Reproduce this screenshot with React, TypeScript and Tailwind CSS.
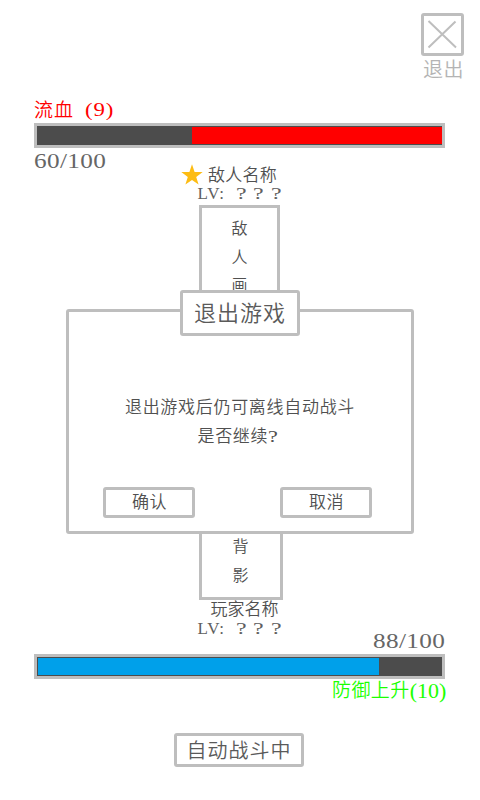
import type { ReactNode } from "react";

const cjk = "font-['Liberation_Serif','Noto_Sans_CJK_SC',sans-serif] font-[350]";
const latin = "font-['Liberation_Serif',serif]";

function Level() {
  return (
    <div className={`${latin} flex h-[17px] items-center text-[17px] leading-[17px] text-[#606060]`}>
      <span className="w-[38px] tracking-[1px]">LV:</span>
      <span className="w-[17.5px] origin-left scale-x-[1.4]">?</span>
      <span className="w-[17.5px] origin-left scale-x-[1.4]">?</span>
      <span className="w-[12px] origin-left scale-x-[1.4]">?</span>
    </div>
  );
}

function Wide({ children, className = "" }: { children: ReactNode; className?: string }) {
  return <span className={`${latin} inline-block ${className}`}>{children}</span>;
}

function DialogButton({ label }: { label: string }) {
  return (
    <button className="flex h-[31px] w-[92px] items-center justify-center rounded-[3px] border-[3px] border-[#bebebe] bg-white pt-px pl-px text-[17px] leading-[20px] tracking-[0.6px]">
      {label}
    </button>
  );
}

function ExitDialog() {
  return (
    <div
      role="dialog"
      className="absolute top-[290px] left-[66px] flex h-[244px] w-[348px] flex-col items-center pt-[19px]"
    >
      <div className="flex w-full flex-1 flex-col items-center rounded-[3px] border-[3px] border-[#bebebe] bg-white">
        <h2 className="mt-[-22px] flex h-[46px] w-[120px] shrink-0 items-center justify-center rounded-[3px] border-[3px] border-[#bebebe] bg-white pt-[2px] text-[22px] leading-[26px] font-[350] tracking-[1px] text-[#5a5a5a]">
          退出游戏
        </h2>
        <p className="mt-[57px] text-center text-[17px] leading-[29px] tracking-[0.7px]">
          退出游戏后仍可离线自动战斗
          <br />
          <span className="mr-[6px]">
            是否继续<span className="inline-block origin-left scale-x-[1.3]">?</span>
          </span>
        </p>
        <div className="mt-[36px] flex w-full justify-between pr-[39px] pl-[34px]">
          <DialogButton label="确认" />
          <DialogButton label="取消" />
        </div>
      </div>
    </div>
  );
}

export default function App() {
  return (
    <main className={`${cjk} relative h-[800px] w-[480px] overflow-hidden bg-white whitespace-nowrap text-[#505050]`}>
      <div className="flex h-full flex-col">
        <header className="flex h-[84px] shrink-0 justify-end pt-[13px] pr-[16px]">
          <button className="flex w-[43px] flex-col items-center text-[#b4b4b4]">
            <span className="flex h-[43px] w-[43px] shrink-0 items-center justify-center rounded-[3px] border-[3px] border-[#bebebe]">
              <svg width="37" height="37" viewBox="0 0 37 37" stroke="#bebebe" strokeWidth="2" fill="none">
                <path d="M4.5 5L32 31.5M31.5 5.5L4.5 31.5" />
              </svg>
            </span>
            <span className="ml-[2px] flex h-[28px] items-center text-[20px] leading-[26px] tracking-[0.5px]">退出</span>
          </button>
        </header>

        <section className="flex h-[81px] shrink-0 flex-col pt-[12px] pr-[35px] pl-[34px]">
          <div className="flex h-[27px] shrink-0 items-center text-[19px] leading-[26px] text-[#ff0000]">
            <span className="mt-[2px] tracking-[1px]">流血</span>
            <Wide className="ml-[11px] origin-left scale-x-[1.2] text-[19px] tracking-[0.7px]">(9)</Wide>
          </div>
          <div className="flex h-[25px] shrink-0 justify-end border-[3px] border-[#bebebe] bg-[#4c4c4c] py-px">
            <div className="w-[250px] bg-[#ff0000]" />
          </div>
          <div className="flex h-[17px] shrink-0 items-start pt-[4px] text-[#666]">
            <Wide className="origin-left scale-x-[1.2] text-[21px] leading-[18px] tracking-[0.3px]">60/100</Wide>
          </div>
        </section>

        <section className="flex shrink-0 flex-col items-center">
          <div className="flex h-[20px] items-center pr-[22px]">
            <svg className="mr-[5px] h-[22px] w-[22px]" viewBox="0 0 22 22" fill="#fdbc13">
              <path d="M11 0.3L13.6 8.1H21.7L15.2 12.9L17.6 20.5L11 16L4.4 20.5L6.8 12.9L0.3 8.1H8.4Z" />
            </svg>
            <span className="mt-[2px] text-[17px] leading-[20px] tracking-[0.3px]">敌人名称</span>
          </div>
          <Level />
          <div className="mt-[3px] mr-px flex h-[120px] w-[81px] flex-col items-center border-[3px] border-[#bebebe] pt-[7px] text-[16px] leading-[28.5px]">
            <span>敌</span>
            <span>人</span>
            <span>画</span>
          </div>
        </section>

        <div className="min-h-0 flex-1" />

        <section className="flex shrink-0 flex-col items-center">
          <div className="ml-[2px] flex h-[100px] w-[84px] flex-col items-center justify-end border-[3px] border-[#bebebe] pr-px pb-[7px] text-[16px] leading-[28.5px]">
            <span>背</span>
            <span>影</span>
          </div>
          <div className="mt-px mb-px ml-[9px] text-[17px] leading-[18px]">玩家名称</div>
          <Level />
        </section>

        <section className="flex h-[71px] shrink-0 flex-col items-end pr-[35px] pl-[34px]">
          <div className="flex h-[17px] shrink-0 items-start text-[#666]">
            <Wide className="mt-[-5px] origin-right scale-x-[1.2] text-[21px] leading-[18px] tracking-[0.3px]">88/100</Wide>
          </div>
          <div className="flex h-[25px] w-full shrink-0 border-[3px] border-[#bebebe] bg-[#4c4c4c] p-px">
            <div className="w-[341px] bg-[#00a0ea]" />
          </div>
          <div className="flex h-[24px] shrink-0 items-center text-[19px] leading-[22px] text-[#1bff00]">
            <span className="mr-[3px] tracking-[0.4px]">防御上升</span>
            <Wide className="mr-[-1px] origin-right scale-x-[1.1] text-[20px]">(10)</Wide>
          </div>
        </section>

        <footer className="flex h-[92px] shrink-0 items-start justify-center pt-[25px] pr-[2px]">
          <button className="flex h-[34px] w-[130px] items-center justify-center rounded-[3px] border-[3px] border-[#bebebe] pt-[2px] text-[20px] leading-[24px] tracking-[1px] text-[#5a5a5a]">
            自动战斗中
          </button>
        </footer>
      </div>

      <ExitDialog />
    </main>
  );
}
